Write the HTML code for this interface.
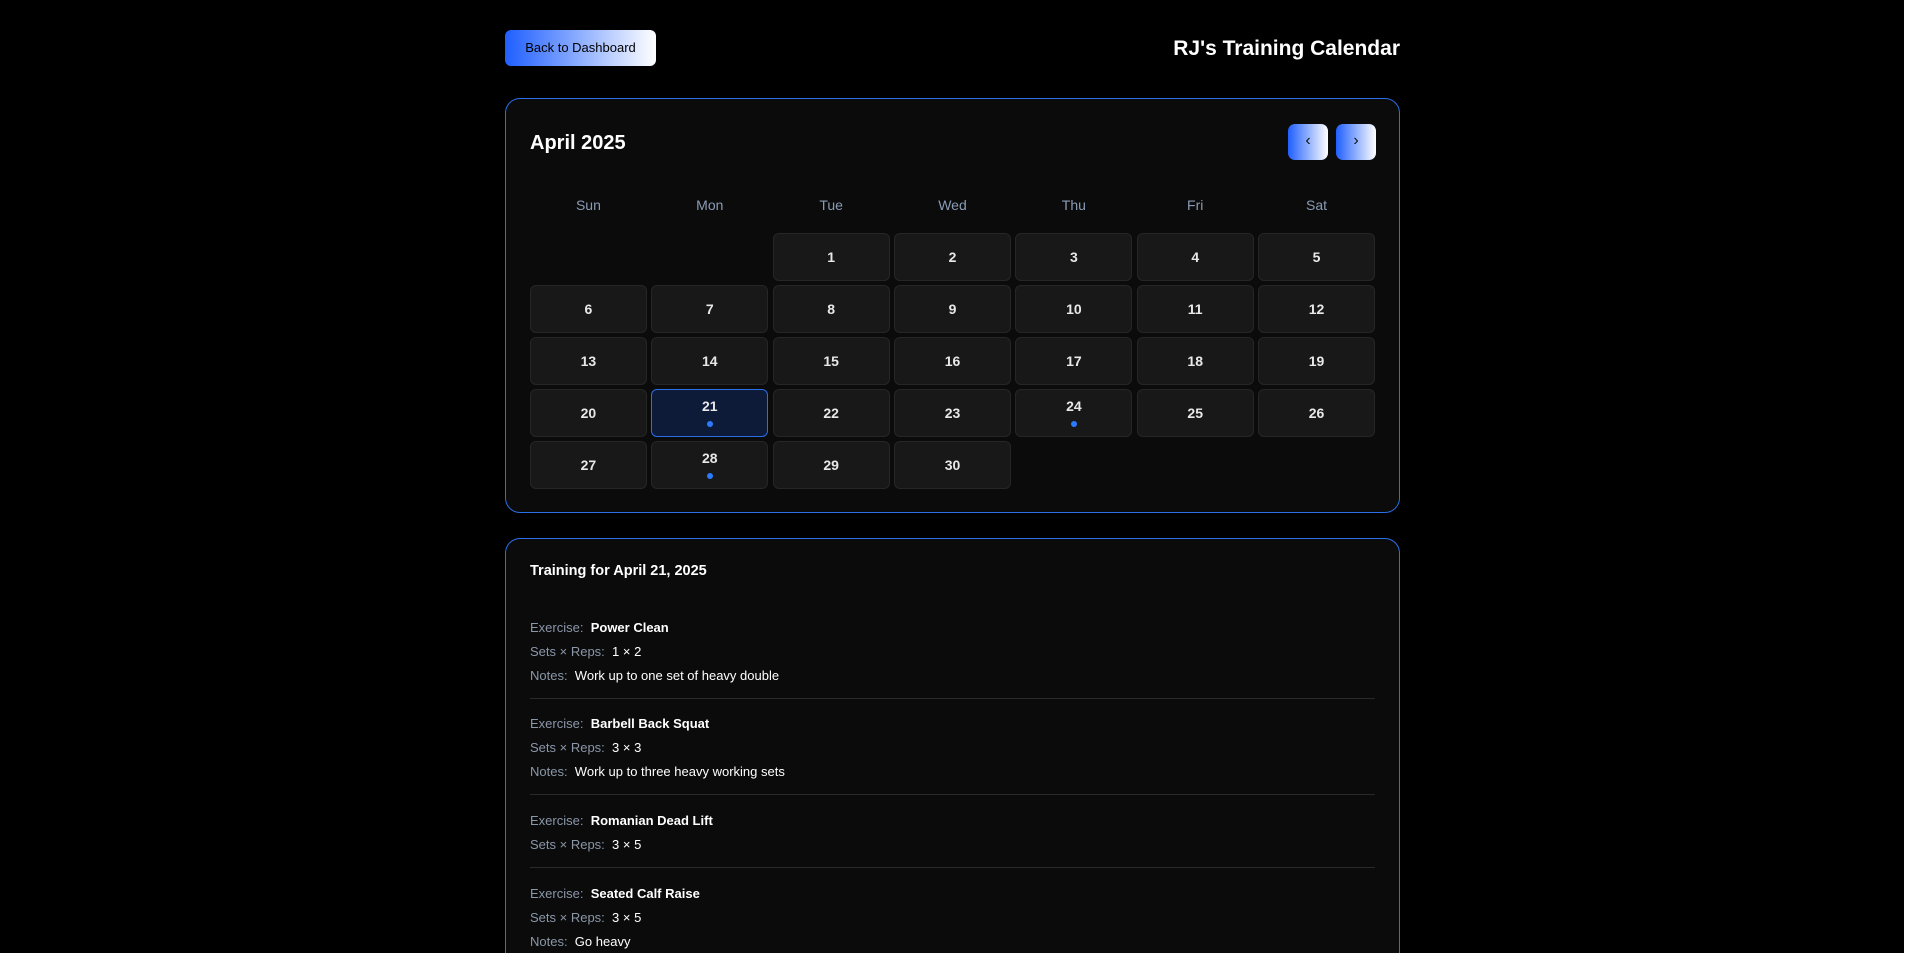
<!DOCTYPE html>
<html><head><meta charset="utf-8"><style>
*{box-sizing:border-box;margin:0;padding:0}
html,body{width:1913px;height:953px;overflow:hidden;background:#000;font-family:"Liberation Sans",sans-serif;color:#fff}
#root{position:relative;width:1913px;height:953px;overflow:hidden}
.back{position:absolute;left:505px;top:30px;width:151px;height:36px;border-radius:6px;background:linear-gradient(90deg,#1f5fff,#fff);color:#000;font-size:13px;line-height:36px;text-align:center}
.title{position:absolute;right:513px;top:37px;font-size:21px;font-weight:bold}
.card{position:absolute;left:505px;width:895px;background:#0b0b0b;border:1px solid #2a6ee8;border-radius:15px}
.c1{top:98px;height:415px}
.month{position:absolute;left:24px;top:33px;font-size:20px;font-weight:bold}
.nav{position:absolute;top:25px;width:40px;height:36px;border-radius:7px;background:linear-gradient(90deg,#1f5fff,#fff);color:#111;font-size:16px;text-align:center;line-height:34px}
.grid{position:absolute;left:24px;top:57px;width:845px;display:grid;grid-template-columns:repeat(7,1fr);column-gap:4.5px;row-gap:4px}
.wd{height:77px;line-height:98px;text-align:center;color:#8a9bb5;font-size:14px;margin-bottom:-4px}
.d{height:48px;background:#181818;border:1px solid #262626;border-radius:6px;text-align:center;line-height:46px;font-size:14px;font-weight:bold;color:#e8e8e8;position:relative}
.d.e{background:none;border:none}
.d.dot{line-height:32px}
.d.dot::after{content:"";position:absolute;left:50%;top:31px;width:6px;height:6px;margin-left:-3px;border-radius:50%;background:#2b7bff}
.d.sel{background:#0d1a38;border-color:#2a6ee8}
.c2{top:538px;height:420px;border-bottom:none;border-radius:15px 15px 0 0}
.c2 h3{position:absolute;left:24px;top:24px;font-size:14.5px;font-weight:bold}
.ex{position:absolute;left:24px;width:845px;font-size:13px}
.ex div{height:24px;line-height:24px}
.l{color:#8a97a8}
.b{font-weight:bold}
.sep{position:absolute;left:24px;width:845px;height:1px;background:#2a2a2a}
.sb{position:absolute;right:0;top:0;width:9px;height:953px;background:#fff}
</style></head><body><div id="root">
<div class="back">Back to Dashboard</div>
<div class="title">RJ's Training Calendar</div>
<div class="card c1">
<div class="month">April 2025</div>
<div class="nav" style="left:782px">&#8249;</div>
<div class="nav" style="left:830px">&#8250;</div>
<div class="grid">
<div class="wd">Sun</div><div class="wd">Mon</div><div class="wd">Tue</div><div class="wd">Wed</div><div class="wd">Thu</div><div class="wd">Fri</div><div class="wd">Sat</div>
<div class="d e"></div><div class="d e"></div><div class="d">1</div><div class="d">2</div><div class="d">3</div><div class="d">4</div><div class="d">5</div>
<div class="d">6</div><div class="d">7</div><div class="d">8</div><div class="d">9</div><div class="d">10</div><div class="d">11</div><div class="d">12</div>
<div class="d">13</div><div class="d">14</div><div class="d">15</div><div class="d">16</div><div class="d">17</div><div class="d">18</div><div class="d">19</div>
<div class="d">20</div><div class="d sel dot">21</div><div class="d">22</div><div class="d">23</div><div class="d dot">24</div><div class="d">25</div><div class="d">26</div>
<div class="d">27</div><div class="d dot">28</div><div class="d">29</div><div class="d">30</div>
</div>
</div>
<div class="card c2">
<h3>Training for April 21, 2025</h3>
<div class="ex" style="top:77px"><div><span class="l">Exercise:</span>&nbsp; <span class="b">Power Clean</span></div><div><span class="l">Sets × Reps:</span>&nbsp; 1 × 2</div><div><span class="l">Notes:</span>&nbsp; Work up to one set of heavy double</div></div>
<div class="sep" style="top:159px"></div>
<div class="ex" style="top:173px"><div><span class="l">Exercise:</span>&nbsp; <span class="b">Barbell Back Squat</span></div><div><span class="l">Sets × Reps:</span>&nbsp; 3 × 3</div><div><span class="l">Notes:</span>&nbsp; Work up to three heavy working sets</div></div>
<div class="sep" style="top:255px"></div>
<div class="ex" style="top:270px"><div><span class="l">Exercise:</span>&nbsp; <span class="b">Romanian Dead Lift</span></div><div><span class="l">Sets × Reps:</span>&nbsp; 3 × 5</div></div>
<div class="sep" style="top:328px"></div>
<div class="ex" style="top:343px"><div><span class="l">Exercise:</span>&nbsp; <span class="b">Seated Calf Raise</span></div><div><span class="l">Sets × Reps:</span>&nbsp; 3 × 5</div><div><span class="l">Notes:</span>&nbsp; Go heavy</div></div>
</div>
<div class="sb"></div>
</div></body></html>
